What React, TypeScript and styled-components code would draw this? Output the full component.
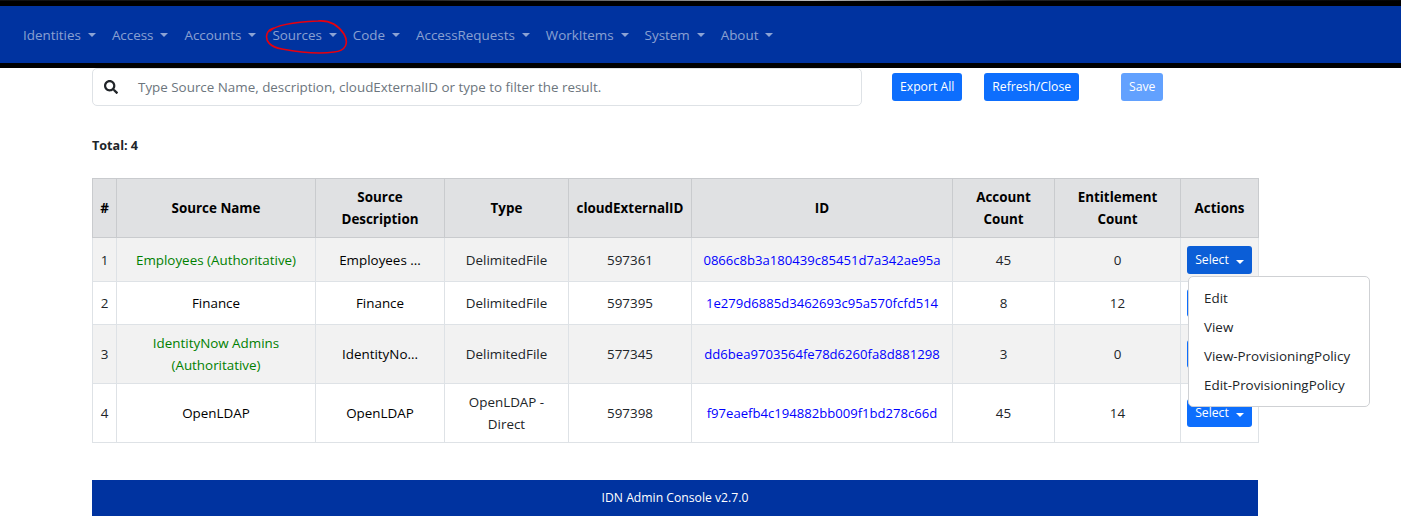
import React from "react";
import styled, { createGlobalStyle } from "styled-components";
import { FaSearch } from "react-icons/fa";

const GlobalStyle = createGlobalStyle`
  html, body {
    margin: 0;
    padding: 0;
    background: #fff;
  }
  body {
    font-family: "Open Sans", "Noto Sans", "Liberation Sans", sans-serif;
    font-size: 13.4px;
    line-height: 22px;
    color: #212529;
    overflow: hidden;
  }
`;

const TopStrip = styled.div`
  height: 1px;
  background: linear-gradient(90deg, #111 0%, #222 30%, #bbb 58%, #222 72%, #050505 100%);
`;

const NavBar = styled.nav`
  position: relative;
  height: 57px;
  background: #0033a0;
  border-top: 5px solid #000;
  border-bottom: 5px solid #000;
  display: flex;
  align-items: center;
  padding-left: 15px;
`;

const NavItem = styled.a<{ $gap: number }>`
  display: inline-flex;
  align-items: center;
  color: rgba(255, 255, 255, 0.55);
  padding: 0 8px;
  margin-right: ${(p) => p.$gap}px;
  white-space: nowrap;
`;

const Caret = styled.span`
  display: inline-block;
  margin-left: 7px;
  border-top: 4.5px solid currentColor;
  border-left: 4.5px solid transparent;
  border-right: 4.5px solid transparent;
`;

const Scribble = styled.svg`
  position: absolute;
  left: 262px;
  top: 13px;
`;

const Page = styled.main`
  padding: 0 143px 0 92px;
`;

const ToolRow = styled.div`
  display: flex;
  align-items: center;
  height: 38px;
`;

const SearchBox = styled.div`
  width: 770px;
  height: 38px;
  box-sizing: border-box;
  display: flex;
  align-items: center;
  border: 1px solid #dee2e6;
  border-radius: 5px;
  padding-left: 11px;
  margin-right: 30px;
  color: #212529;
`;

const Placeholder = styled.span`
  color: #6c757d;
  margin-left: 20px;
  white-space: nowrap;
`;

const Button = styled.button<{ $active?: boolean; $faded?: boolean }>`
  height: 28px;
  box-sizing: border-box;
  padding: 0 8px;
  border: 0;
  border-radius: 3px;
  font: inherit;
  font-size: 12.2px;
  color: #fff;
  white-space: nowrap;
  background: ${(p) => (p.$active ? "#0b5ed7" : p.$faded ? "#62a1fe" : "#0d6efd")};
`;

const ToolButton = styled(Button)<{ $after: number }>`
  margin-right: ${(p) => p.$after}px;
`;

const Total = styled.div`
  font-weight: 700;
  font-size: 12.6px;
  margin: 29px 0 21px;
`;

const Table = styled.table`
  border-collapse: collapse;
  table-layout: fixed;
  width: 1166px;
  text-align: center;
`;

const Col = styled.col<{ $w: number }>`
  width: ${(p) => p.$w}px;
`;

const HeadCell = styled.th`
  background: #e0e1e3;
  border: 1px solid #c9cbce;
  font-weight: 700;
  color: #000;
  padding: 7px 4px;
  height: 43px;
`;

const Row = styled.tr<{ $h: number; $odd: boolean }>`
  height: ${(p) => p.$h}px;
  background: ${(p) => (p.$odd ? "#f2f2f2" : "#fff")};
`;

const Cell = styled.td`
  position: relative;
  border: 1px solid #dee2e6;
  padding: 0 4px;
  overflow: hidden;
`;

const ActionCell = styled(Cell)`
  overflow: visible;
`;

const NameText = styled.span<{ $auth: boolean }>`
  color: ${(p) => (p.$auth ? "#008000" : "#000")};
`;

const IdText = styled.span`
  color: #0000ff;
  font-size: 13.1px;
  white-space: nowrap;
`;

const Menu = styled.ul`
  position: absolute;
  z-index: 2;
  left: 7px;
  top: 38px;
  width: 182px;
  height: 131px;
  box-sizing: border-box;
  margin: 0;
  padding: 7px 0;
  list-style: none;
  text-align: left;
  background: #fff;
  border: 1px solid #cfd1d4;
  border-radius: 5px;
`;

const MenuItem = styled.li`
  height: 29px;
  line-height: 29px;
  padding-left: 15px;
  white-space: nowrap;
`;

const Footer = styled.footer`
  margin-top: 37px;
  width: 1166px;
  height: 36px;
  background: #0033a0;
  color: #fff;
  font-size: 12.2px;
  display: flex;
  align-items: center;
  justify-content: center;
`;

const navItems = [
  { label: "Identities", gap: 0 },
  { label: "Access", gap: 0 },
  { label: "Accounts", gap: 0 },
  { label: "Sources", gap: 0 },
  { label: "Code", gap: 0 },
  { label: "AccessRequests", gap: 0 },
  { label: "WorkItems", gap: 0 },
  { label: "System", gap: 0 },
  { label: "About", gap: 0 },
];

const columns = [24, 199, 129, 124, 123, 261, 102, 126, 78];

const rows = [
  {
    name: "Employees (Authoritative)",
    auth: true,
    desc: "Employees ...",
    type: "DelimitedFile",
    ext: "597361",
    id: "0866c8b3a180439c85451d7a342ae95a",
    accounts: 45,
    ents: 0,
    h: 44,
  },
  {
    name: "Finance",
    auth: false,
    desc: "Finance",
    type: "DelimitedFile",
    ext: "597395",
    id: "1e279d6885d3462693c95a570fcfd514",
    accounts: 8,
    ents: 12,
    h: 43,
  },
  {
    name: "IdentityNow Admins (Authoritative)",
    auth: true,
    desc: "IdentityNo...",
    type: "DelimitedFile",
    ext: "577345",
    id: "dd6bea9703564fe78d6260fa8d881298",
    accounts: 3,
    ents: 0,
    h: 59,
  },
  {
    name: "OpenLDAP",
    auth: false,
    desc: "OpenLDAP",
    type: "OpenLDAP - Direct",
    ext: "597398",
    id: "f97eaefb4c194882bb009f1bd278c66d",
    accounts: 45,
    ents: 14,
    h: 59,
  },
];

export default function App() {
  return (
    <>
      <GlobalStyle />
      <TopStrip />
      <NavBar>
        {navItems.map((item) => (
          <NavItem key={item.label} $gap={item.gap}>
            {item.label}
            <Caret />
          </NavItem>
        ))}
        <Scribble width="92" height="40" viewBox="0 0 92 40" fill="none">
          <path
            d="M8 12 C14 6 32 3 56 2 C68 1 76 6 82 15 C87 24 84 32 72 33 C58 35 36 33 20 30 C8 28 3 22 5 15 C6 12 8 10 12 9"
            stroke="#e8000d"
            strokeWidth="1.6"
            strokeLinecap="round"
          />
        </Scribble>
      </NavBar>
      <Page>
        <ToolRow>
          <SearchBox>
            <FaSearch size={14} />
            <Placeholder>
              Type Source Name, description, cloudExternalID or type to filter the result.
            </Placeholder>
          </SearchBox>
          <ToolButton $after={22}>Export All</ToolButton>
          <ToolButton $after={42}>Refresh/Close</ToolButton>
          <ToolButton $after={0} $faded>
            Save
          </ToolButton>
        </ToolRow>
        <Total>Total: 4</Total>
        <Table>
          <colgroup>
            {columns.map((w, i) => (
              <Col key={i} $w={w} />
            ))}
          </colgroup>
          <thead>
            <tr>
              <HeadCell>#</HeadCell>
              <HeadCell>Source Name</HeadCell>
              <HeadCell>Source Description</HeadCell>
              <HeadCell>Type</HeadCell>
              <HeadCell>cloudExternalID</HeadCell>
              <HeadCell>ID</HeadCell>
              <HeadCell>Account Count</HeadCell>
              <HeadCell>Entitlement Count</HeadCell>
              <HeadCell>Actions</HeadCell>
            </tr>
          </thead>
          <tbody>
            {rows.map((r, i) => (
              <Row key={r.id} $h={r.h} $odd={i % 2 === 0}>
                <Cell>{i + 1}</Cell>
                <Cell>
                  <NameText $auth={r.auth}>{r.name}</NameText>
                </Cell>
                <Cell>
                  <NameText $auth={false}>{r.desc}</NameText>
                </Cell>
                <Cell>{r.type}</Cell>
                <Cell>{r.ext}</Cell>
                <Cell>
                  <IdText>{r.id}</IdText>
                </Cell>
                <Cell>{r.accounts}</Cell>
                <Cell>{r.ents}</Cell>
                <ActionCell>
                  <Button $active={i === 0}>
                    Select
                    <Caret />
                  </Button>
                  {i === 0 && (
                    <Menu>
                      <MenuItem>Edit</MenuItem>
                      <MenuItem>View</MenuItem>
                      <MenuItem>View-ProvisioningPolicy</MenuItem>
                      <MenuItem>Edit-ProvisioningPolicy</MenuItem>
                    </Menu>
                  )}
                </ActionCell>
              </Row>
            ))}
          </tbody>
        </Table>
        <Footer>IDN Admin Console v2.7.0</Footer>
      </Page>
    </>
  );
}
